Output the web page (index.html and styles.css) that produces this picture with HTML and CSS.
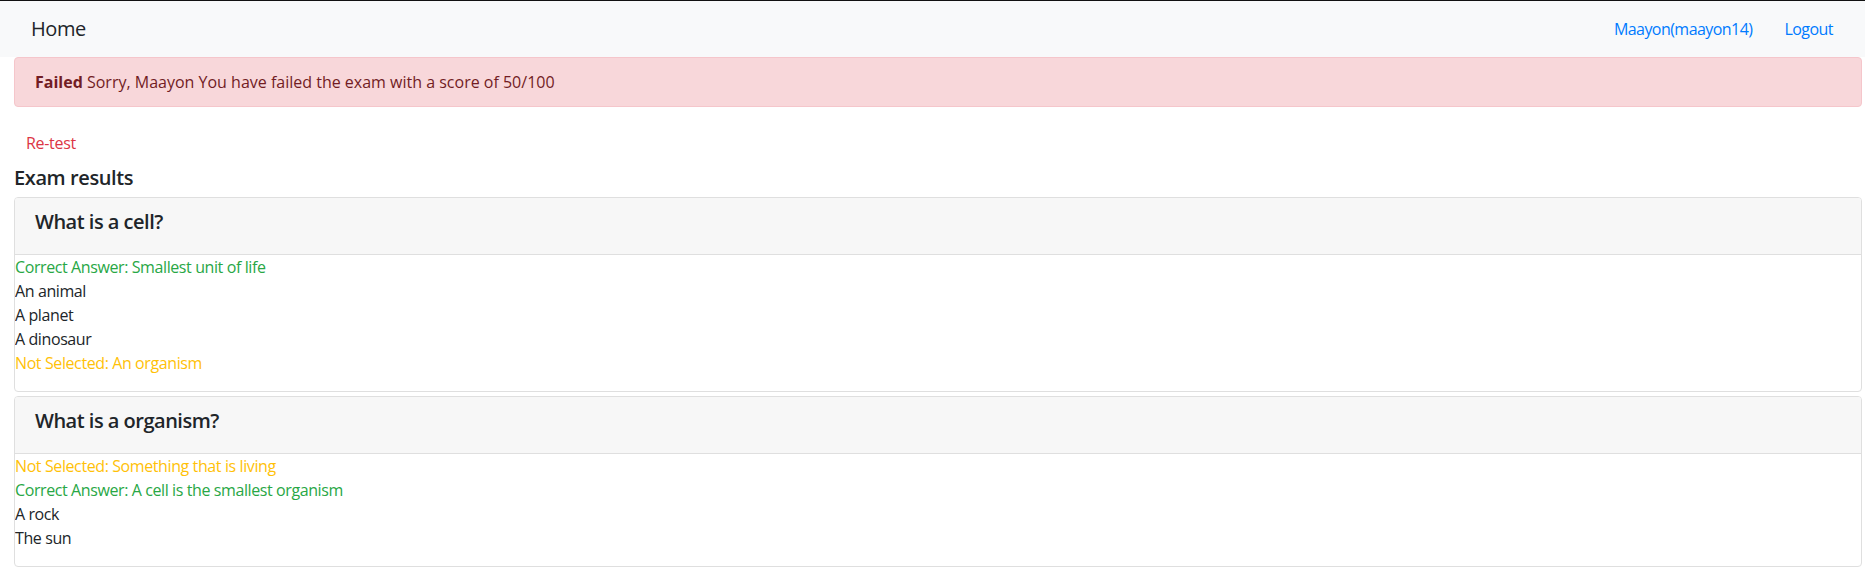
FILE: index.html
```html
<!DOCTYPE html>
<html lang="en">
<head>
<meta charset="utf-8">
<title>Exam results</title>
<link rel="stylesheet" href="styles.css">
</head>
<body>
<nav class="navbar">
  <a class="brand" href="#">Home</a>
  <div class="nav-right">
    <a class="nav-link" href="#">Maayon(maayon14)</a>
    <a class="nav-link" href="#">Logout</a>
  </div>
</nav>
<main class="main">
  <div class="alert"><strong>Failed</strong> Sorry, Maayon You have failed the exam with a score of 50/100</div>
  <div class="retest-row"><a class="btn-retest" href="#">Re-test</a></div>
  <h5 class="section-title">Exam results</h5>
  <div class="card">
    <div class="card-header"><h5 class="question">What is a cell?</h5></div>
    <ul class="answers">
      <li class="correct">Correct Answer: Smallest unit of life</li>
      <li>An animal</li>
      <li>A planet</li>
      <li>A dinosaur</li>
      <li class="missed">Not Selected: An organism</li>
    </ul>
  </div>
  <div class="card">
    <div class="card-header"><h5 class="question">What is a organism?</h5></div>
    <ul class="answers">
      <li class="missed">Not Selected: Something that is living</li>
      <li class="correct">Correct Answer: A cell is the smallest organism</li>
      <li>A rock</li>
      <li>The sun</li>
    </ul>
  </div>
</main>
</body>
</html>
```
FILE: styles.css
```css
* { box-sizing: border-box; }
html, body { margin: 0; padding: 0; }
body {
  font-family: "Open Sans", "Noto Sans", sans-serif;
  font-size: 16px;
  line-height: 24px;
  color: #212529;
  background: #fff;
  border-top: 1px solid #111;
}
a { text-decoration: none; }
.navbar {
  height: 56px;
  background: #f8f9fa;
  display: flex;
  align-items: center;
  justify-content: space-between;
  padding: 0 16px 0 31px;
}
.brand {
  font-size: 20px;
  line-height: 30px;
  color: #212529;
  letter-spacing: -0.4px;
}
.nav-right { display: flex; }
.nav-link {
  color: #007bff;
  padding: 0 16px;
  letter-spacing: -0.55px;
}
.main { padding: 0 3px 0 14px; }
.alert {
  background: #f8d7da;
  border: 1px solid #f5c6cb;
  color: #721c24;
  border-radius: 4px;
  padding: 12px 20px;
  margin-bottom: 16px;
}
.alert strong { font-weight: 700; }
.retest-row { padding: 8px 12px 11px; }
.btn-retest { color: #dc3545; letter-spacing: -0.3px; }
.section-title {
  font-size: 20px;
  line-height: 24px;
  font-weight: 600;
  margin: 0 0 7px;
  letter-spacing: -0.4px;
}
.card {
  border: 1px solid #dfdfdf;
  border-radius: 4px;
  margin-bottom: 4px;
  background: #fff;
  overflow: hidden;
}
.card-header {
  background: #f7f7f7;
  border-bottom: 1px solid #dfdfdf;
  padding: 12px 20px;
}
.question {
  font-size: 20px;
  line-height: 24px;
  font-weight: 600;
  margin: 0 0 8px;
  letter-spacing: -0.5px;
}
.answers {
  list-style: none;
  margin: 0 0 16px;
  padding: 0;
  letter-spacing: -0.4px;
}
.correct { color: #28a745; }
.missed { color: #ffc107; }
```
